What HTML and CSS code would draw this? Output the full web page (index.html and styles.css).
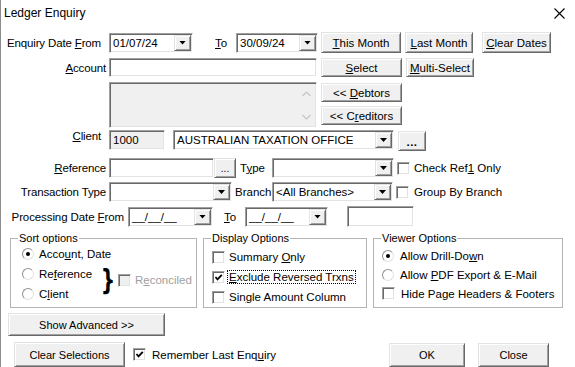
FILE: index.html
```html
<!DOCTYPE html>
<html lang="en">
<head>
<meta charset="UTF-8" />
<title>Ledger Enquiry</title>
<link rel="stylesheet" href="styles.css">
</head>
<body>

<div class="dialog">
  <div class="titlebar">
    <span class="title">Ledger Enquiry</span>
    <svg class="close-x" width="11" height="11" viewBox="0 0 11 11"><path d="M0.5 0.5 L10.5 10.5 M10.5 0.5 L0.5 10.5" stroke="#000" stroke-width="1.1" fill="none"/></svg>
  </div>

  <!-- Dates -->
  <div class="row r-dates">
    <span class="lbl-main">Enquiry Date <u>F</u>rom</span>
    <div class="field combo date-from"><span class="val">01/07/24</span><span class="drop"><i></i></span></div>
    <span class="lbl-to"><u>T</u>o</span>
    <div class="field combo date-to"><span class="val">30/09/24</span><span class="drop"><i></i></span></div>
    <button class="btn btn-this"><span><u>T</u>his Month</span></button>
    <button class="btn btn-last"><span><u>L</u>ast Month</span></button>
    <button class="btn btn-clear"><span><u>C</u>lear Dates</span></button>
  </div>

  <!-- Account -->
  <div class="row r-account">
    <span class="lbl-main tight"><u>A</u>ccount</span>
    <div class="field account-input"></div>
    <button class="btn btn-select"><span><u>S</u>elect</span></button>
    <button class="btn btn-multi"><span><u>M</u>ulti-Select</span></button>
  </div>

  <div class="row r-list">
    <div class="field listbox">
      <span class="scroll-arrow"><svg width="9" height="6" viewBox="0 0 9 6"><path d="M0.5 5 L4.5 1 L8.5 5" stroke="#c4c4c4" stroke-width="1.2" fill="none"/></svg></span>
      <span class="scroll-arrow"><svg width="9" height="6" viewBox="0 0 9 6"><path d="M0.5 1 L4.5 5 L8.5 1" stroke="#c4c4c4" stroke-width="1.2" fill="none"/></svg></span>
    </div>
    <div class="side-btns">
      <button class="btn btn-side"><span>&lt;&lt; <u>D</u>ebtors</span></button>
      <button class="btn btn-side"><span>&lt;&lt; C<u>r</u>editors</span></button>
    </div>
  </div>

  <!-- Client -->
  <div class="row r-client">
    <span class="lbl-main"><u>C</u>lient</span>
    <div class="field client-code">1000</div>
    <div class="field combo client-name"><span class="val">AUSTRALIAN TAXATION OFFICE</span><span class="drop"><i></i></span></div>
    <button class="btn btn-dots">...</button>
  </div>

  <div class="row r-ref">
    <span class="lbl-main tight"><u>R</u>eference</span>
    <div class="field ref-input"></div>
    <button class="btn btn-ref-dots">...</button>
    <span class="lbl-type">T<u>y</u>pe</span>
    <div class="field combo type-combo"><span class="val"></span><span class="drop"><i></i></span></div>
    <span class="chk chk-ref"></span>
    <span class="chk-text">Check Ref<u>1</u> Only</span>
  </div>

  <div class="row r-trans">
    <span class="lbl-main tight">Transaction Type</span>
    <div class="field combo trans-combo"><span class="val"></span><span class="drop"><i></i></span></div>
    <span class="lbl-branch">Branch</span>
    <div class="field combo branch-combo"><span class="val">&lt;All Branches&gt;</span><span class="drop"><i></i></span></div>
    <span class="chk chk-branch"></span>
    <span class="chk-text branch-text">Group By Branch</span>
  </div>

  <div class="row r-proc">
    <span class="lbl-proc">Processing Date <u>F</u>rom</span>
    <div class="field combo proc-from"><span class="val">__/__/__</span><span class="drop"><i></i></span></div>
    <span class="lbl-to2"><u>T</u>o</span>
    <div class="field combo proc-to"><span class="val">__/__/__</span><span class="drop"><i></i></span></div>
    <div class="field proc-extra"></div>
  </div>

  <!-- Option groups -->
  <div class="groups">
    <fieldset class="group sort-group">
      <legend>Sort options</legend>
      <div class="sort-body">
        <div class="opt-list">
          <div class="opt"><span class="radio on"></span><span class="opt-text">Acco<u>u</u>nt, Date</span></div>
          <div class="opt"><span class="radio"></span><span class="opt-text">Re<u>f</u>erence</span></div>
          <div class="opt"><span class="radio"></span><span class="opt-text">C<u>l</u>ient</span></div>
        </div>
        <div class="recon">
          <span class="brace">}</span>
          <span class="chk disabled"></span>
          <span class="muted">R<u>e</u>conciled</span>
        </div>
      </div>
    </fieldset>

    <fieldset class="group display-group">
      <legend>Display Options</legend>
      <div class="opt-list">
        <div class="opt"><span class="chk"></span><span class="opt-text">Summary <u>O</u>nly</span></div>
        <div class="opt"><span class="chk checked"><svg width="9" height="9" viewBox="0 0 9 9"><path d="M1.5 4 L3.5 6.3 L7.8 1.8" stroke="#000" stroke-width="1.8" fill="none"/></svg></span><span class="opt-text focused"><u>E</u>xclude Reversed Trxns</span></div>
        <div class="opt"><span class="chk"></span><span class="opt-text">Sin<u>g</u>le Amount Column</span></div>
      </div>
    </fieldset>

    <fieldset class="group viewer-group">
      <legend>Viewer Options</legend>
      <div class="opt-list">
        <div class="opt"><span class="radio on"></span><span class="opt-text">Allow Drill-Do<u>w</u>n</span></div>
        <div class="opt"><span class="radio"></span><span class="opt-text">Allow <u>P</u>DF Export &amp; E-Mail</span></div>
        <div class="opt"><span class="chk"></span><span class="opt-text">Hide Page Headers &amp; Footers</span></div>
      </div>
    </fieldset>
  </div>

  <button class="btn btn-adv">Show Advanced &gt;&gt;</button>

  <div class="row r-bottom">
    <button class="btn btn-clear-sel">Clear Selections</button>
    <span class="chk checked chk-remember"><svg width="9" height="9" viewBox="0 0 9 9"><path d="M1.5 4 L3.5 6.3 L7.8 1.8" stroke="#000" stroke-width="1.8" fill="none"/></svg></span>
    <span class="remember-text">Remember Last Enq<u>u</u>iry</span>
    <button class="btn btn-ok">OK</button>
    <button class="btn btn-close">Close</button>
  </div>
</div>

</body>
</html>
```

FILE: styles.css
```css
* {
  box-sizing: border-box;
}
body {
  margin: 0;
  font-family: 'Liberation Sans', Arial, sans-serif;
  font-size: 11.5px;
  color: #000;
  background: #fff;
}
u {
  text-decoration-thickness: 1px;
  text-underline-offset: 1px;
}

/* Window */
.dialog {
  width: 575px;
  height: 367px;
  overflow: hidden;
  background: #fff;
  box-shadow: inset 1px 0 0 #8c8c8c;
}
.titlebar {
  height: 26px;
  display: flex;
  align-items: center;
  justify-content: space-between;
  padding: 0 10px 0 4px;
}
.title {
  font-size: 12px;
}

.row {
  display: flex;
  align-items: center;
}

/* Labels */
.lbl-main {
  width: 109px;
  text-align: right;
  padding-right: 8px;
  white-space: nowrap;
  letter-spacing: -0.15px;
}
.lbl-main.tight {
  padding-right: 3px;
}
.lbl-to {
  width: 43px;
  padding-left: 22px;
}
.lbl-type {
  width: 36px;
  padding-left: 4px;
}
.lbl-branch {
  width: 40px;
  padding-left: 3px;
}
.lbl-proc {
  width: 128px;
  text-align: right;
  padding-right: 4px;
  white-space: nowrap;
  letter-spacing: -0.1px;
}
.lbl-to2 {
  width: 32px;
  padding-left: 11px;
}

/* Sunken fields */
.field {
  height: 20px;
  background: #fff;
  border: 1px solid;
  border-color: #a0a0a0 #fff #fff #a0a0a0;
  box-shadow: inset 1px 1px 0 #696969, inset -1px -1px 0 #e3e3e3;
  padding: 1px;
  display: flex;
  align-items: center;
  white-space: nowrap;
}
.combo .val {
  flex: 1;
  padding-left: 2px;
  overflow: hidden;
}
.drop {
  width: 17px;
  height: 16px;
  background: #f0f0f0;
  border: 1px solid;
  border-color: #e3e3e3 #696969 #696969 #e3e3e3;
  box-shadow: inset 1px 1px 0 #fff, inset -1px -1px 0 #a0a0a0;
  display: flex;
  align-items: center;
  justify-content: center;
}
.drop i {
  width: 7px;
  height: 4px;
  background: #000;
  clip-path: polygon(0 0, 100% 0, 50% 100%);
}

/* Raised buttons */
.btn {
  height: 21px;
  padding: 0;
  margin: 0;
  font: inherit;
  color: #000;
  background: #f0f0f0;
  border: 1px solid;
  border-color: #e3e3e3 #696969 #696969 #e3e3e3;
  box-shadow: inset 1px 1px 0 #fff, inset -1px -1px 0 #a0a0a0;
  display: flex;
  align-items: center;
  justify-content: center;
  white-space: nowrap;
}

/* Row: dates */
.r-dates {
  margin-top: 6px;
  height: 21px;
}
.date-from {
  width: 84px;
}
.date-to {
  width: 82px;
}
.btn-this {
  margin-left: 3px;
  width: 80px;
}
.btn-last {
  margin-left: 4px;
  width: 68px;
}
.btn-clear {
  margin-left: 9px;
  width: 69px;
}

/* Row: account */
.r-account {
  margin-top: 5px;
  height: 19px;
}
.account-input {
  width: 208px;
  height: 19px;
}
.btn-select {
  margin-left: 4px;
  width: 81px;
  height: 19px;
}
.btn-multi {
  margin-left: 4px;
  width: 68px;
  height: 19px;
}

.r-list {
  margin: 5px 0 0 109px;
  height: 46px;
  align-items: stretch;
}
.listbox {
  width: 208px;
  height: 46px;
  background: #f0f0f0;
  flex-direction: column;
  align-items: flex-end;
  justify-content: space-between;
  padding: 2px 1px 2px 2px;
}
.scroll-arrow {
  width: 17px;
  height: 17px;
  display: flex;
  align-items: center;
  justify-content: center;
}
.side-btns {
  margin-left: 4px;
  display: flex;
  flex-direction: column;
}
.btn-side {
  width: 81px;
  height: 19px;
  margin-top: 1px;
}
.btn-side + .btn-side {
  margin-top: 4px;
}

/* Row: client */
.r-client {
  margin-top: 2px;
  height: 21px;
  align-items: flex-start;
}
.client-code {
  width: 56px;
  background: #f0f0f0;
  padding-left: 3px;
}
.client-name {
  margin-left: 8px;
  width: 221px;
}
.btn-dots {
  margin: 1px 0 0 4px;
  width: 28px;
  height: 20px;
  align-items: flex-end;
  padding-bottom: 2px;
  font-weight: bold;
  letter-spacing: 0.5px;
}

/* Row: reference */
.r-ref {
  margin-top: 7px;
  height: 20px;
}
.ref-input {
  width: 105px;
}
.btn-ref-dots {
  width: 22px;
  height: 20px;
  align-items: flex-end;
  padding-bottom: 3px;
  font-size: 10px;
}
.type-combo {
  width: 122px;
}
.chk {
  width: 13px;
  height: 13px;
  flex: none;
  background: #fff;
  border: 1px solid;
  border-color: #a0a0a0 #fff #fff #a0a0a0;
  box-shadow: inset 1px 1px 0 #696969, inset -1px -1px 0 #e3e3e3;
  display: flex;
  align-items: center;
  justify-content: center;
}
.chk.disabled {
  background: #f0f0f0;
}
.chk-ref {
  margin-left: 3px;
}
.chk-text {
  margin-left: 4px;
}

/* Row: transaction */
.r-trans {
  margin-top: 4px;
  height: 20px;
}
.trans-combo {
  width: 123px;
}
.branch-combo {
  width: 121px;
}
.chk-branch {
  margin-left: 3px;
}
.branch-text {
  margin-left: 5px;
}

/* Row: processing date */
.r-proc {
  margin-top: 4px;
  height: 21px;
}
.proc-from {
  width: 85px;
}
.proc-to {
  width: 83px;
}
.proc-extra {
  margin-left: 19px;
  width: 67px;
  height: 21px;
}

/* Group boxes */
.groups {
  display: flex;
  margin-top: 5px;
  padding-left: 10px;
  height: 76px;
}
.group {
  margin: 0;
  padding: 0 0 0 7px;
  border: 1px solid #b4b4b4;
  height: 76px;
  min-width: 0;
}
.group legend {
  padding: 0 1px;
  font-size: 11px;
  line-height: 13px;
}
.sort-group {
  width: 187px;
}
.display-group {
  margin-left: 6px;
  width: 164px;
}
.viewer-group {
  margin-left: 6px;
  width: 190px;
}
.opt {
  display: flex;
  align-items: center;
  height: 20px;
}
.opt-text {
  margin-left: 5px;
  white-space: nowrap;
}
.radio {
  width: 12px;
  height: 12px;
  flex: none;
  border-radius: 50%;
  background: #fff;
  border: 1px solid;
  border-color: #8f8f8f #e3e3e3 #e3e3e3 #8f8f8f;
  display: flex;
  align-items: center;
  justify-content: center;
}
.radio.on::after {
  content: "";
  width: 4px;
  height: 4px;
  border-radius: 50%;
  background: #000;
}

.sort-body {
  display: flex;
  margin-top: -1px;
}
.sort-group .opt-list {
  width: 82px;
}
.sort-group .opt {
  padding-left: 4px;
}
.recon {
  display: flex;
  align-items: center;
  margin-top: 16px;
  height: 40px;
}
.brace {
  width: 18px;
  padding-left: 1px;
  font-family: 'DejaVu Sans', sans-serif;
  font-size: 29px;
  font-weight: bold;
  line-height: 40px;
  transform: scaleX(0.7);
  transform-origin: left center;
}
.muted {
  margin-left: 4px;
  color: #a0a0a0;
}

.display-group .opt-list {
  margin-top: 2px;
}
.display-group .opt {
  padding-left: 1px;
}
.display-group .opt-text {
  margin-left: 4px;
}
.focused {
  outline: 1px dotted #000;
  padding: 0 1px;
  margin-left: 3px !important;
}

.viewer-group .opt-list {
  margin-top: 1px;
}
.viewer-group .opt {
  height: 19px;
  padding-left: 1px;
}
.viewer-group .opt-text {
  margin-left: 6px;
}

/* Bottom buttons */
.btn-adv {
  margin: 5px 0 0 8px;
  width: 157px;
  height: 23px;
  font-size: 11px;
}
.r-bottom {
  margin-top: 6px;
  height: 25px;
}
.btn-clear-sel {
  margin-left: 14px;
  width: 111px;
  height: 25px;
  font-size: 11px;
}
.chk-remember {
  margin-left: 8px;
}
.remember-text {
  margin-left: 6px;
}
.btn-ok {
  margin-left: auto;
  width: 76px;
  height: 24px;
  font-size: 11px;
}
.btn-close {
  margin: 0 26px 0 13px;
  width: 71px;
  height: 24px;
  font-size: 11px;
}
```
